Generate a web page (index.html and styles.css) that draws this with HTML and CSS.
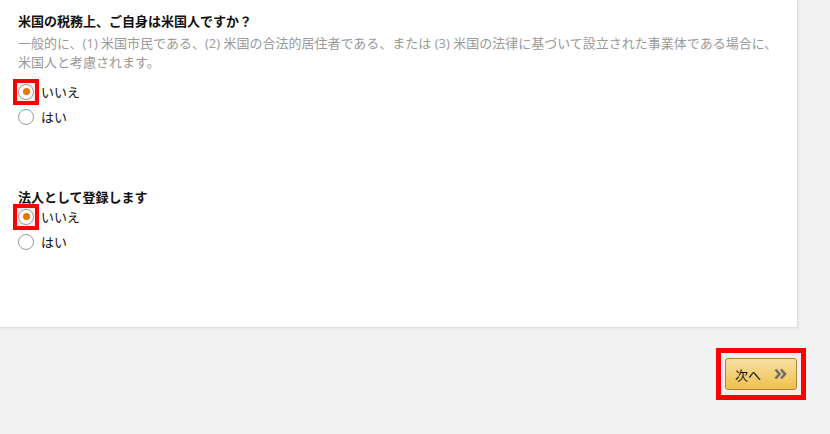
FILE: index.html
```html
<!DOCTYPE html>
<html lang="ja">

<head>
    <meta charset="UTF-8">
    <title>米国の税務情報</title>
    <link rel="stylesheet" href="styles.css">
</head>

<body>
    <div class="card">
        <div class="question">
            <h3 class="question-title">米国の税務上、ご自身は米国人ですか？</h3>
            <p class="question-help">一般的に、(1) 米国市民である、(2) 米国の合法的居住者である、または (3) 米国の法律に基づいて設立された事業体である場合に、米国人と考慮されます。</p>
            <div class="options options-first">
                <label class="option">
                    <span class="radio-wrap highlight"><span class="radio checked"></span></span>
                    <span>いいえ</span>
                </label>
                <label class="option">
                    <span class="radio-wrap"><span class="radio"></span></span>
                    <span>はい</span>
                </label>
            </div>
        </div>

        <div class="question question-second">
            <h3 class="question-title">法人として登録します</h3>
            <div class="options options-second">
                <label class="option">
                    <span class="radio-wrap highlight"><span class="radio checked"></span></span>
                    <span>いいえ</span>
                </label>
                <label class="option">
                    <span class="radio-wrap"><span class="radio"></span></span>
                    <span>はい</span>
                </label>
            </div>
        </div>
    </div>

    <div class="actions">
        <div class="button-highlight">
            <button class="next-button">次へ
                <svg class="next-icon" width="13" height="12" viewBox="0 0 13 12">
                    <path d="M1.5 1.5 L5.5 6 L1.5 10.5" fill="none" stroke="#6e6e6e" stroke-width="2.6" />
                    <path d="M7 1.5 L11 6 L7 10.5" fill="none" stroke="#6e6e6e" stroke-width="2.6" />
                </svg>
            </button>
        </div>
    </div>
</body>

</html>
```

FILE: styles.css
```css
body {
    font-family: "Open Sans", "Noto Sans CJK JP", sans-serif;
    background-color: #f2f2f2;
    margin: 0;
    padding: 0;
    color: #111;
}

.card {
    width: 798px;
    height: 328px;
    box-sizing: border-box;
    padding: 12px 18px 0 18px;
    background-color: #fff;
    border-right: 1px solid #dedede;
    border-bottom: 1px solid #dedede;
    box-shadow: 1px 1px 2px rgba(0, 0, 0, 0.06);
}

.question-title {
    margin: 0;
    font-size: 13px;
    font-weight: bold;
    line-height: 18px;
}

.question-help {
    margin: 4px 0 0 0;
    font-size: 13px;
    line-height: 19px;
    color: #999;
}

.options {
    display: flex;
    flex-direction: column;
    margin-left: -5px;
}

.options-first {
    margin-top: 7px;
}

.options-second {
    margin-top: -2px;
}

.question-second {
    margin-top: 59px;
}

.option {
    display: flex;
    align-items: center;
    height: 25px;
    font-size: 13px;
}

.radio-wrap {
    display: flex;
    padding: 1px;
    border: 4px solid transparent;
    margin-right: 2px;
}

.radio-wrap.highlight {
    border-color: #ff0000;
    background-color: #f4eded;
}

.radio {
    width: 16px;
    height: 16px;
    box-sizing: border-box;
    border: 1px solid #9a9a9a;
    border-radius: 50%;
    background-color: #fff;
    position: relative;
}

.radio.checked::after {
    content: "";
    position: absolute;
    left: 3.5px;
    top: 3.5px;
    width: 7px;
    height: 7px;
    border-radius: 50%;
    background-color: #e77600;
}

.actions {
    display: flex;
    justify-content: flex-end;
    padding: 20px 24px 0 0;
}

.button-highlight {
    border: 5px solid #ff0000;
    padding: 5px 4px;
    background-color: #f6eeee;
}

.next-button {
    display: flex;
    align-items: center;
    gap: 13px;
    width: 72px;
    height: 32px;
    padding: 0 0 0 9px;
    font-family: "Open Sans", "Noto Sans CJK JP", sans-serif;
    font-size: 13px;
    color: #111;
    background: linear-gradient(to bottom, #f7dfa5, #f0c14b);
    border: 1px solid #a88734;
    border-radius: 3px;
    cursor: pointer;
}
```
